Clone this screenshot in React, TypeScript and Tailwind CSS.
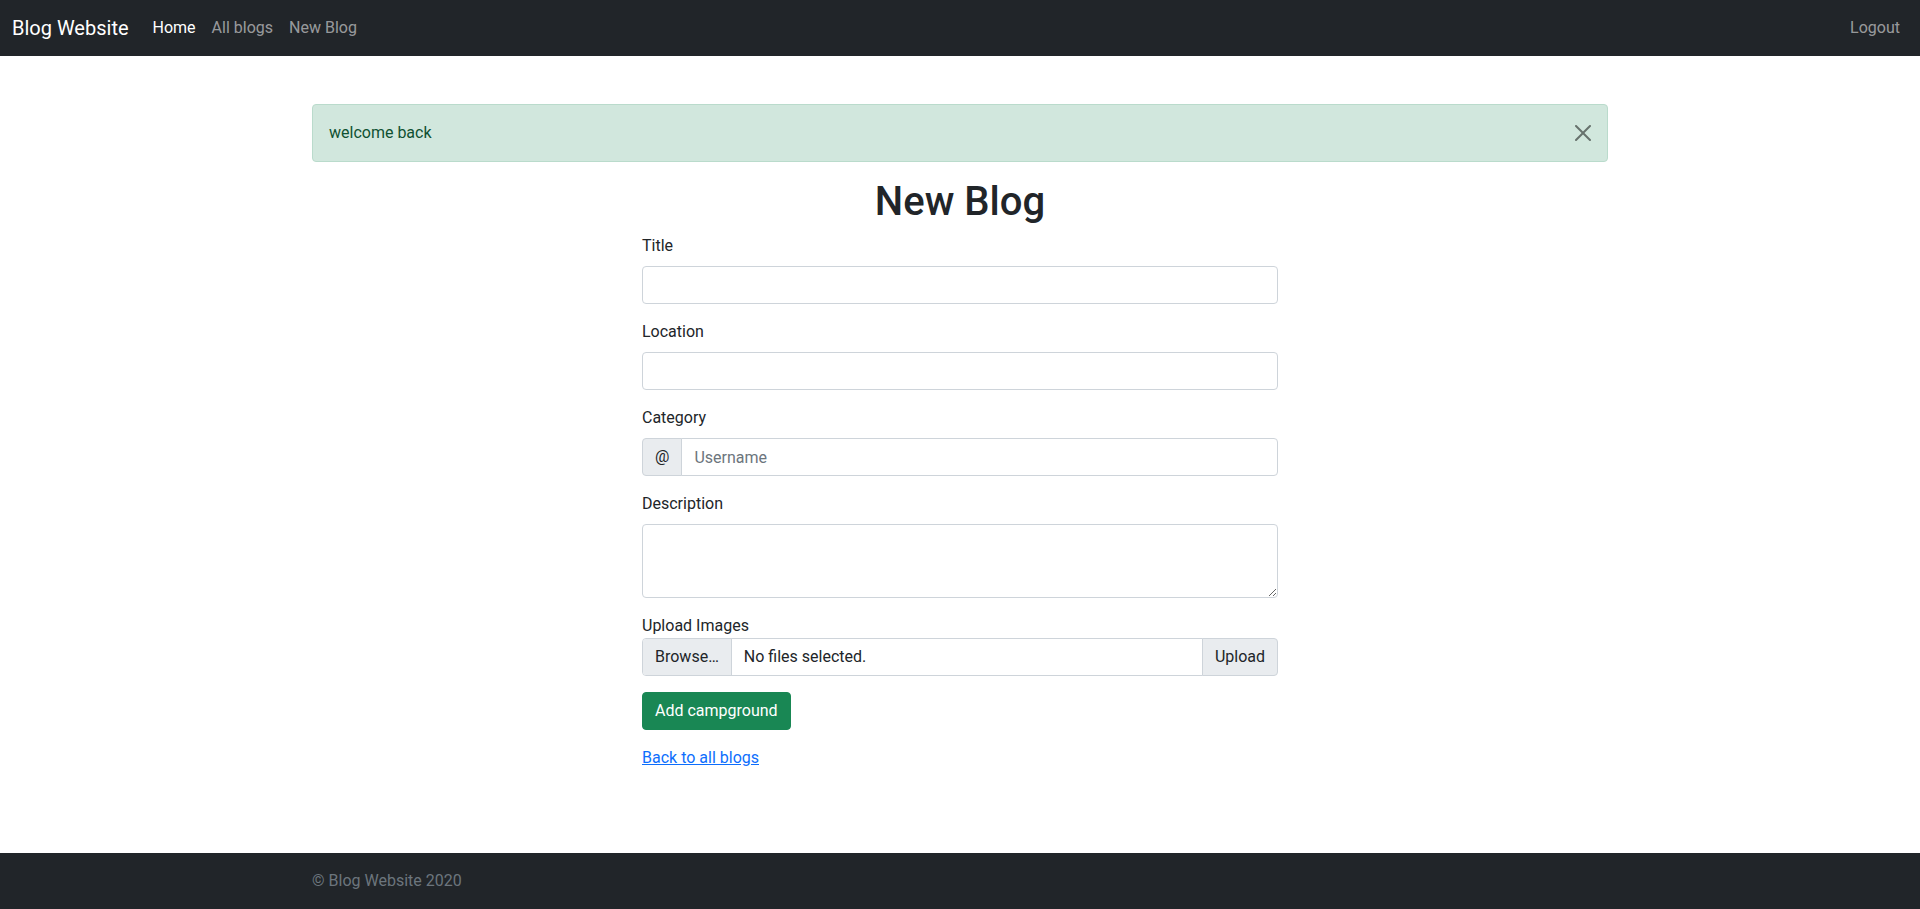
import React from 'react'

const labelCls = 'block mb-2 text-base leading-6'
const inputCls =
  'block w-full h-[38px] px-3 py-1.5 text-base leading-6 text-[#212529] bg-white border border-[#ced4da] rounded outline-none'

const App = () => {
  return (
    <div className="flex min-h-screen flex-col bg-white font-['Roboto','Liberation_Sans',sans-serif] text-base leading-6 text-[#212529]">
      {/* Navbar */}
      <nav className="flex h-[56px] items-center bg-[#212529] px-3">
        <a href="#" className="mr-4 py-[5px] text-[20px] leading-[30px] text-white">
          Blog Website
        </a>
        <div className="flex">
          <a href="#" className="px-2 py-2 text-white">Home</a>
          <a href="#" className="px-2 py-2 text-[rgba(255,255,255,0.55)]">All blogs</a>
          <a href="#" className="px-2 py-2 text-[rgba(255,255,255,0.55)]">New Blog</a>
        </div>
        <div className="ml-auto flex">
          <a href="#" className="px-2 py-2 text-[rgba(255,255,255,0.55)]">Logout</a>
        </div>
      </nav>

      {/* Main */}
      <main className="mx-auto mt-12 w-[1320px] px-3">
        <div className="relative mb-4 rounded border border-[#badbcc] bg-[#d1e7dd] p-4 pr-12 text-[#0f5132]">
          welcome back
          <button className="absolute right-0 top-0 px-4 py-5 opacity-50">
            <svg viewBox="0 0 16 16" className="h-4 w-4" fill="#000">
              <path d="M.293.293a1 1 0 0 1 1.414 0L8 6.586 14.293.293a1 1 0 1 1 1.414 1.414L9.414 8l6.293 6.293a1 1 0 0 1-1.414 1.414L8 9.414l-6.293 6.293a1 1 0 0 1-1.414-1.414L6.586 8 .293 1.707a1 1 0 0 1 0-1.414z" />
            </svg>
          </button>
        </div>

        <h1 className="mb-2 text-center text-[40px] font-medium leading-[1.2]">New Blog</h1>

        <form className="mx-auto w-[636px]" onSubmit={e => e.preventDefault()}>
          <div className="mb-4">
            <label className={labelCls}>Title</label>
            <input type="text" className={inputCls} />
          </div>
          <div className="mb-4">
            <label className={labelCls}>Location</label>
            <input type="text" className={inputCls} />
          </div>
          <div className="mb-4">
            <label className={labelCls}>Category</label>
            <div className="flex h-[38px]">
              <span className="flex items-center rounded-l border border-[#ced4da] bg-[#e9ecef] px-3">@</span>
              <input
                type="text"
                placeholder="Username"
                className="-ml-px block h-[38px] flex-1 rounded-r border border-[#ced4da] bg-white px-3 py-1.5 text-base leading-6 outline-none placeholder:text-[#6c757d]"
              />
            </div>
          </div>
          <div className="mb-4">
            <label className={labelCls}>Description</label>
            <textarea className="block h-[74px] w-full rounded border border-[#ced4da] bg-white px-3 py-1.5 text-base leading-6 outline-none" />
          </div>
          <div className="mb-4">
            <div className="leading-6">Upload Images</div>
            <div className="flex h-[38px]">
              <div className="flex flex-1 items-stretch overflow-hidden rounded-l border border-[#ced4da] bg-white">
                <span className="flex items-center border-r border-[#ced4da] bg-[#e9ecef] px-3">Browse…</span>
                <span className="flex items-center pl-3">No files selected.</span>
              </div>
              <span className="-ml-px flex items-center rounded-r border border-[#ced4da] bg-[#e9ecef] px-3">Upload</span>
            </div>
          </div>
          <div className="mb-4">
            <button className="h-[38px] rounded border border-[#198754] bg-[#198754] px-3 text-white">
              Add campground
            </button>
          </div>
          <a href="#" className="text-[#0d6efd] underline">Back to all blogs</a>
        </form>
      </main>

      {/* Footer */}
      <footer className="mt-auto bg-[#212529] py-4">
        <div className="mx-auto w-[1320px] px-3 text-[#6c757d]">© Blog Website 2020</div>
      </footer>
    </div>
  )
}

export default App
